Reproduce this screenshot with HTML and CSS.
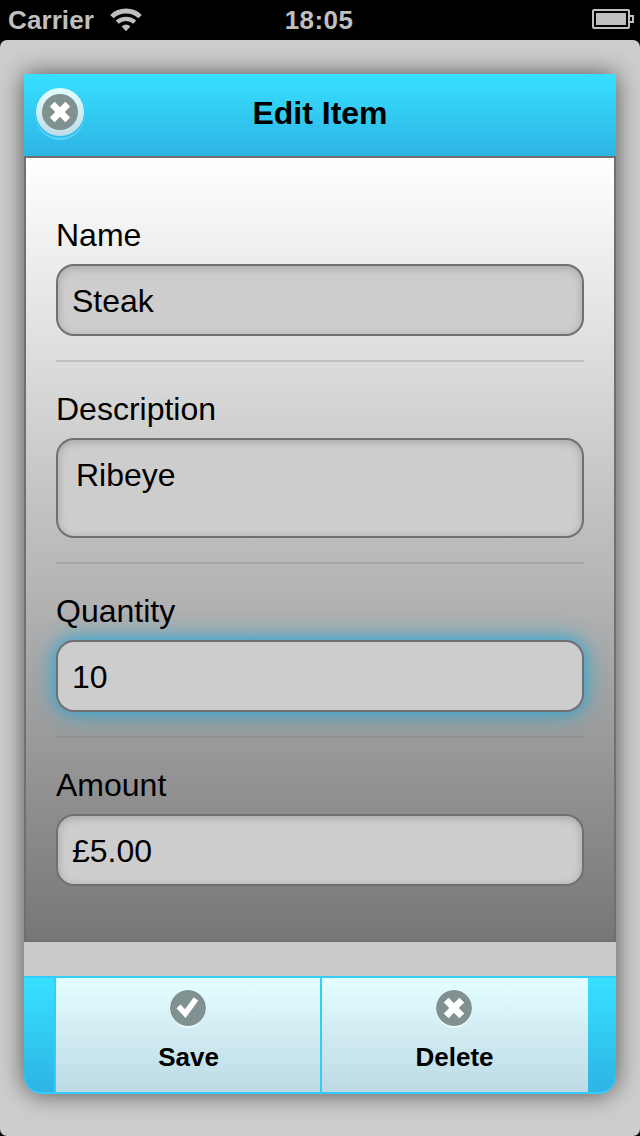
FILE: index.html
```html
<!DOCTYPE html>
<html lang="en">
<head>
<meta charset="utf-8">
<title>Edit Item</title>
<link rel="stylesheet" href="styles.css">
</head>
<body>
<header class="status">
  <div class="status-left">
    <span class="carrier">Carrier</span>
    <svg class="wifi" width="32" height="24" viewBox="0 0 32 24">
      <path d="M1.9 8.6 C9.5 1.1 22.5 1.1 30.1 8.6" fill="none" stroke="#bfbfbf" stroke-width="4.8"/>
      <path d="M7.3 14.2 C12 9.7 20 9.7 24.7 14.2" fill="none" stroke="#bfbfbf" stroke-width="4.4"/>
      <path d="M11.6 18.4 Q16 14.4 20.4 18.4 L16 23.2 Z" fill="#bfbfbf"/>
    </svg>
  </div>
  <span class="clock">18:05</span>
  <svg class="battery" width="42" height="20" viewBox="0 0 42 20">
    <rect x="1" y="1" width="36" height="18" rx="1" fill="none" stroke="#bfbfbf" stroke-width="2"/>
    <rect x="4" y="4" width="30" height="12" fill="#bfbfbf"/>
    <path d="M38 7 H41 V13 H38" fill="none" stroke="#bfbfbf" stroke-width="2"/>
  </svg>
</header>
<main class="screen">
  <section class="dialog">
    <div class="titlebar">
      <span class="close">
        <svg class="icon" viewBox="0 0 36 36"><circle cx="18" cy="18" r="18" fill="#819091"/><path d="M10.2 10.2 L25.8 25.8 M25.8 10.2 L10.2 25.8" stroke="#fff" stroke-width="6.8"/></svg>
      </span>
      <h1 class="title">Edit Item</h1>
    </div>
    <form class="content">
      <div class="field">
        <span class="label">Name</span>
        <div class="input">Steak</div>
      </div>
      <div class="field">
        <span class="label">Description</span>
        <div class="input textarea">Ribeye</div>
      </div>
      <div class="field">
        <span class="label">Quantity</span>
        <div class="input focused">10</div>
      </div>
      <div class="field">
        <span class="label">Amount</span>
        <div class="input">£5.00</div>
      </div>
    </form>
    <footer class="toolbar">
      <div class="action">
        <svg class="icon lit" viewBox="0 0 36 36"><circle cx="18" cy="18" r="18" fill="#819091"/><path d="M8.5 16.4 L15.3 23.6 L26 8.9" fill="none" stroke="#fff" stroke-width="5.6"/></svg>
        <span class="caption">Save</span>
      </div>
      <div class="action delete">
        <svg class="icon lit" viewBox="0 0 36 36"><circle cx="18" cy="18" r="18" fill="#819091"/><path d="M10.2 10.2 L25.8 25.8 M25.8 10.2 L10.2 25.8" stroke="#fff" stroke-width="6.8"/></svg>
        <span class="caption">Delete</span>
      </div>
    </footer>
  </section>
</main>
</body>
</html>
```
FILE: styles.css
```css
* { box-sizing: border-box; }

body {
  margin: 0;
  height: 1136px;
  background: #000;
  color: #000;
  font-family: "Liberation Sans", Arial, sans-serif;
  overflow: hidden;
}

.status {
  display: grid;
  grid-template-columns: 1fr auto 1fr;
  align-items: center;
  height: 40px;
  padding: 0 6px 0 8px;
  color: #bfbfbf;
  font-size: 26px;
  font-weight: bold;
}

.status-left { display: flex; align-items: center; gap: 16px; }
.carrier { letter-spacing: 0.1px; }
.clock { letter-spacing: 0.4px; margin-right: 4px; }
.battery { justify-self: end; margin-bottom: 2px; }

.screen {
  height: 1096px;
  padding: 34px 24px 42px;
  background: #cdcdcd;
  border-radius: 7px;
}

.dialog {
  display: flex;
  flex-direction: column;
  height: 1020px;
  background: #cbcbcb;
  border-radius: 0 0 18px 18px;
  box-shadow: 0 0 24px rgba(0, 0, 0, 0.6);
}

.titlebar {
  display: grid;
  grid-template-columns: 48px 1fr 48px;
  align-items: center;
  height: 82px;
  padding: 0 12px 4px;
  background: linear-gradient(#37e0ff, #2eb4e5);
}

.close {
  display: flex;
  align-items: center;
  justify-content: center;
  width: 48px;
  height: 48px;
  margin-top: -2px;
  border-radius: 50%;
  background: linear-gradient(#e2ffff, #bfdce7);
  box-shadow: 0 1px 0 1px #30bff2, 0 3px 0 1px #5fd3f5;
}

.icon { display: block; width: 36px; height: 36px; }
.lit { border-radius: 50%; box-shadow: 0 2px 0 rgba(255, 255, 255, 0.5); }

.title {
  margin: 0;
  text-align: center;
  font-size: 32px;
  line-height: 40px;
}

.content {
  height: 786px;
  padding: 30px 30px 0;
  border: 2px solid #707070;
  background: linear-gradient(#fff, #777);
}

.field {
  padding: 28px 0 24px;
  border-bottom: 2px solid rgba(112, 112, 112, 0.26);
}
.field:last-child { border-bottom: 0; }

.label {
  display: block;
  margin-bottom: 10px;
  font-size: 32px;
  line-height: 38px;
}

.input {
  height: 72px;
  padding: 0 14px;
  border: 2px solid #707070;
  border-radius: 18px;
  background: #cdcdcd;
  box-shadow: inset 0 2px 8px rgba(0, 0, 0, 0.2);
  font-size: 32px;
  line-height: 70px;
}

.textarea { height: 100px; padding: 0 18px; }

.focused { box-shadow: 0 0 24px #20a8d8, 0 0 8px rgba(40, 175, 220, 0.3); }

.toolbar {
  display: grid;
  grid-template-columns: 266px 268px;
  height: 118px;
  margin-top: 34px;
  padding: 0 28px 0 30px;
  border: solid #33ccff;
  border-width: 2px 0;
  border-radius: 0 0 18px 18px;
  background: linear-gradient(#37e0ff, #2eb4e5);
}

.action {
  display: flex;
  flex-direction: column;
  align-items: center;
  padding-top: 12px;
  border-left: 2px solid #33ccff;
  background: linear-gradient(#e3ffff, #bdd9e4);
}

.delete { padding-right: 2px; }

.caption {
  margin: 15px 0 0 1px;
  font-size: 26px;
  font-weight: bold;
  line-height: 32px;
}
```
